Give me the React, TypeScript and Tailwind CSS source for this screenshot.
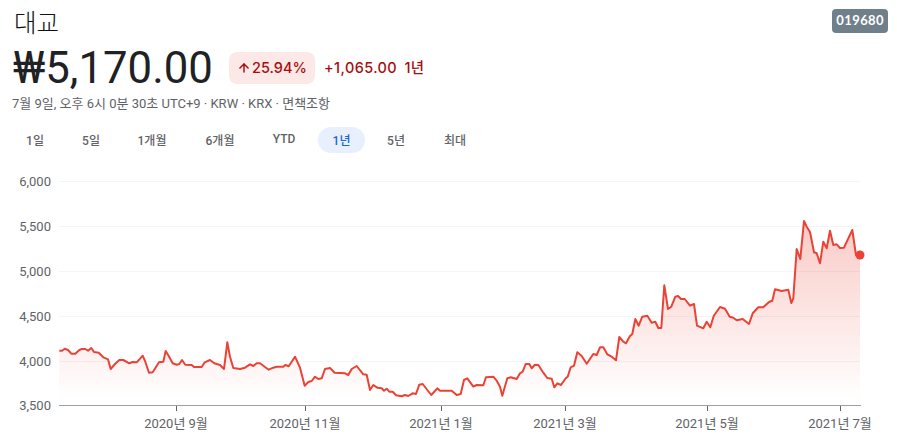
import { ArrowUp } from 'lucide-react'

const CJK = '"Noto Sans CJK KR"'

const ranges = [
  { label: '1일', w: 'w-[54px]' },
  { label: '5일', w: 'w-[58px]' },
  { label: '1개월', w: 'w-[64px]' },
  { label: '6개월', w: 'w-[72px]' },
  { label: 'YTD', w: 'w-[62px]', up: true },
  { label: '1년', w: 'w-[47px]', active: true },
  { label: '5년', w: 'w-[62px]' },
  { label: '최대', w: 'w-[56px]' },
]

const yTicks = [
  { label: '6,000', y: 181 },
  { label: '5,500', y: 226 },
  { label: '5,000', y: 271 },
  { label: '4,500', y: 316 },
  { label: '4,000', y: 361 },
]

const xTicks = [
  { label: '2020년 9월', x: 176 },
  { label: '2020년 11월', x: 305 },
  { label: '2021년 1월', x: 441 },
  { label: '2021년 3월', x: 565 },
  { label: '2021년 5월', x: 707 },
  { label: '2021년 7월', x: 840 },
]

// traced from the reference, x y in zoomed-crop units per segment
const seg1 = [178,92,186,92,194,86,204,90,214,101,226,101,238,90,246,87,256,87,264,92,274,84,282,96,296,98,310,112,324,118,332,147,345,132,358,120,370,120,388,130,398,126,410,127,428,107,436,125,447,158,458,157,477,127,490,125,497,93,506,108,518,130,530,134,538,132,546,120,556,134,575,135,582,141,605,141,614,127,630,120,643,130,660,135,672,147,682,67,690,110,700,144,720,147,735,143,750,133,760,138,770,130,780,130,806,149,820,143,830,140,850,140,856,135,866,139,885,110]
const seg2 = [0,143,14,197,25,186,35,183,45,170,55,177,65,175,75,147,90,144,104,158,135,160,145,165,155,147,170,138,190,163,200,164,210,210,220,195,232,203,245,205,252,212,260,206,268,215,278,215,288,226,305,229,315,225,325,228,338,220,348,222,358,194,368,192,382,210,394,225,412,205,420,212,455,212,470,225,482,222,492,180,502,175,520,200,530,195,550,196,558,172,580,170,590,182,600,200,607,227,622,175,632,172,650,177,660,160,668,155,677,132,688,132,695,145,705,134,715,135,730,158,742,174,755,176,763,202,772,190,783,195,797,175,803,170,812,142,822,137,832,97,845,108,860,131,880,102,890,105]
const seg3 = [0,412,10,412,22,433,35,440,48,451,58,381,70,395,78,400,90,378,97,372,106,327,116,347,127,320,142,317,155,338,166,335,175,354,184,354,193,226,204,297,214,290,226,260,234,258,243,267,254,267,270,287,282,282,291,347,310,355,320,335,331,352,341,318,360,291,375,296,389,320,400,323,410,331,428,327,447,342,458,310,475,292,490,292,507,276,517,272,525,238,545,243,565,239,574,279,580,265,590,117,601,147,612,33,620,50,630,66,642,127,650,130,660,160,670,95,680,115,690,62,700,105,710,103,720,114,732,113,745,85,757,60,768,135,780,137]

function toPoints(seg: number[], ox: number, oy: number) {
  const out: string[] = []
  for (let i = 0; i < seg.length; i += 2) {
    out.push(`${(seg[i] / 3 + ox).toFixed(1)},${(seg[i + 1] / 3 + oy).toFixed(1)}`)
  }
  return out
}

const linePoints = [
  ...toPoints(seg1, 0, 320),
  ...toPoints(seg2, 300, 320),
  ...toPoints(seg3, 600, 210),
].join(' ')

function PriceChart() {
  return (
    <svg width="897" height="291" viewBox="0 153 897 291" className="block">
      <defs>
        <linearGradient id="areaFill" x1="0" y1="221" x2="0" y2="400" gradientUnits="userSpaceOnUse">
          <stop offset="0" stopColor="#ea4335" stopOpacity="0.28" />
          <stop offset="1" stopColor="#ea4335" stopOpacity="0" />
        </linearGradient>
      </defs>
      {yTicks.map((t) => (
        <g key={t.label}>
          <line x1="59" x2="860" y1={t.y + 0.5} y2={t.y + 0.5} stroke="#f4f5f6" />
          <text x="51" y={t.y + 4.5} textAnchor="end" fontSize="13" fill="#5f6368" fontFamily="Roboto, sans-serif">
            {t.label}
          </text>
        </g>
      ))}
      <text x="51" y="409.5" textAnchor="end" fontSize="13" fill="#5f6368" fontFamily="Roboto, sans-serif">
        3,500
      </text>
      <polygon points={`59,405 ${linePoints} 860,405`} fill="url(#areaFill)" />
      <line x1="59" x2="861" y1="405.5" y2="405.5" stroke="#9aa0a6" />
      {xTicks.map((t) => (
        <g key={t.label}>
          <line x1={t.x + 0.5} x2={t.x + 0.5} y1="406" y2="411" stroke="#5f6368" />
          <text x={t.x} y="428" textAnchor="middle" fontSize="13" fill="#5f6368" fontFamily={`Roboto, ${CJK}, sans-serif`}>
            {t.label}
          </text>
        </g>
      ))}
      <polyline points={linePoints} fill="none" stroke="#ea4335" strokeWidth="2" strokeLinejoin="round" />
      <circle cx="860" cy="255" r="4.5" fill="#ea4335" />
    </svg>
  )
}

export default function App() {
  return (
    <div className="w-[897px] h-[444px] overflow-hidden bg-white font-['Roboto','Noto_Sans_CJK_KR',sans-serif]">
      <div className="flex items-start justify-between pl-[14px] pr-[9px] pt-[9px]">
        <h1 className="text-[24.5px] leading-[30px] font-light text-[#111111]">대교</h1>
        <span className="rounded-[4px] bg-[#70808a] px-[4px] h-[24px] flex items-center text-[13px] font-bold text-white font-['Lato',sans-serif] tracking-[0.4px]">
          019680
        </span>
      </div>

      <div className="flex items-center pl-[13px] h-[50px] mt-[4px]">
        <span className="w-[199px] text-[43.7px] leading-[50px] text-[#202124] whitespace-nowrap">₩5,170.00</span>
        <span className="ml-[17px] flex h-[32px] w-[86px] items-center justify-center rounded-[8px] bg-[#fce8e6] text-[14.5px] font-medium text-[#a50e0e] font-['Inter','Noto_Sans_CJK_KR',sans-serif]">
          <ArrowUp className="size-[14px] mr-[1px]" strokeWidth={2.5} />
          25.94%
        </span>
        <span className="ml-[9px] text-[14.5px] tracking-[0.4px] [word-spacing:3px] font-medium text-[#a50e0e] font-['Inter','Noto_Sans_CJK_KR',sans-serif]">
          +1,065.00 1년
        </span>
      </div>

      <div className="pl-[12px] mt-[2px] text-[13px] leading-[18px] text-[#5f6368]">
        7월 9일, 오후 6시 0분 30초 UTC+9 · KRW · KRX · 면책조항
      </div>

      <div className="flex items-center pl-[8px] mt-[14px] h-[26px]">
        {ranges.map((r) => (
          <span
            key={r.label}
            className={
              r.active
                ? `${r.w} h-[26px] pt-[2px] flex items-center justify-center rounded-full bg-[#e8f0fe] text-[12px] font-medium text-[#1967d2]`
                : r.up
                  ? `${r.w} h-[26px] pb-[2px] pr-[6px] flex items-center justify-center text-[12px] font-medium text-[#5f6368]`
                  : `${r.w} h-[26px] pt-[2px] flex items-center justify-center text-[12px] font-medium text-[#5f6368]`
            }
          >
            {r.label}
          </span>
        ))}
      </div>

      <PriceChart />
    </div>
  )
}
